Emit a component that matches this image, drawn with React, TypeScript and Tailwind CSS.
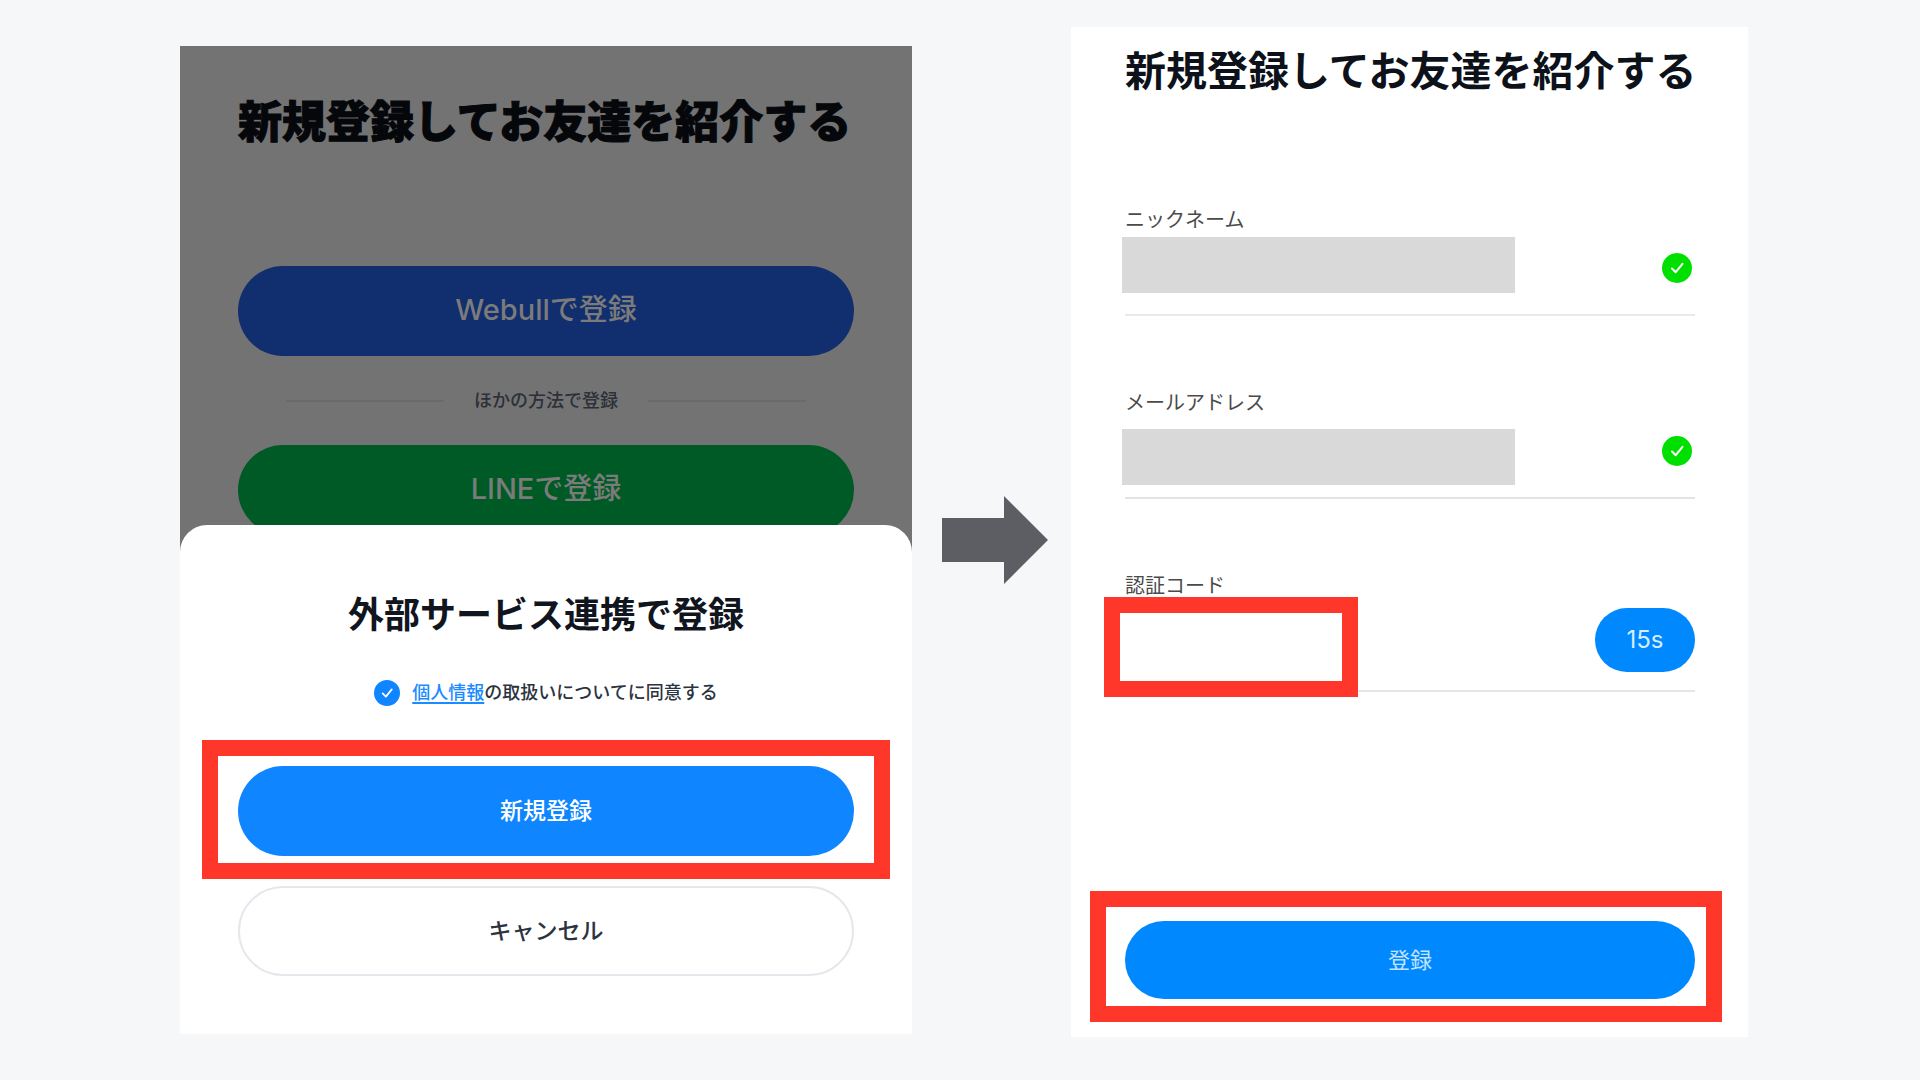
import React from "react";

function CheckMark({ className }: { className: string }) {
  return (
    <svg viewBox="0 0 30 30" className={className} fill="none" aria-hidden="true">
      <path
        d="M10 15.5 L13.7 19.2 L20.5 10.8"
        stroke="white"
        strokeWidth="2"
        strokeLinecap="round"
        strokeLinejoin="round"
      />
    </svg>
  );
}

function ValidBadge() {
  return (
    <span className="mt-[18px] size-[30px] shrink-0 rounded-full bg-[#00e000]">
      <CheckMark className="size-full" />
    </span>
  );
}

function Arrow() {
  return (
    <svg viewBox="0 0 106 88" className="mr-[23px] ml-[30px] h-[88px] w-[106px] self-center" aria-hidden="true">
      <path d="M0 22 H62 V0 L106 44 L62 88 V66 H0 Z" fill="#5c5e63" />
    </svg>
  );
}

function SignupChoice() {
  return (
    <section className="mt-[46px] min-w-0 overflow-hidden bg-white">
      <div className="bg-[#737373] px-[58px] pb-[17px]">
        <svg viewBox="0 0 110 4" className="-ml-1 h-[4px] w-[110px]" aria-hidden="true">
          {[4, 22, 40, 58, 77, 96].map((x) => (
            <circle key={x} cx={x} cy="0" r="3" fill="#6a727a" />
          ))}
        </svg>
        <h1 className="mt-[40px] text-[44px] leading-[64px] font-black whitespace-nowrap text-[#05070b] [-webkit-text-stroke:1px_#05070b]">
          新規登録してお友達を紹介する
        </h1>
        <button type="button" className="mt-[112px] h-[90px] w-full rounded-full bg-[#112e6e] pb-[2px] text-[29px] font-medium text-[#7b7b7b]">
          Webullで登録
        </button>
        <div className="flex h-[89px] items-center gap-[30px] px-[48px]">
          <span className="h-[2px] flex-1 bg-[#696a6c]" />
          <span className="text-[18px] font-medium text-[#2c3037]">ほかの方法で登録</span>
          <span className="h-[2px] flex-1 bg-[#696a6c]" />
        </div>
        <button type="button" className="h-[90px] w-full rounded-full bg-[#005a26] pb-[2px] text-[29px] font-medium text-[#7b7b7b]">
          LINEで登録
        </button>
      </div>

      <div className="relative -mt-[27px] flex flex-col rounded-t-[27px] bg-white px-[22px] pb-[58px]">
        <h2 className="mt-[63px] text-center text-[36px] leading-[54px] font-bold text-[#11151e]">
          外部サービス連携で登録
        </h2>
        <div className="mt-[35px] flex items-center justify-center gap-[12px] text-[18px] leading-[32px] font-medium text-[#2c3340]">
          <span className="relative size-[26px]">
            <input
              id="consent"
              type="checkbox"
              defaultChecked
              className="block size-full appearance-none rounded-full bg-[#0f86ff]"
            />
            <CheckMark className="pointer-events-none absolute inset-0 size-full" />
          </span>
          <label htmlFor="consent">
            <a href="#privacy" className="text-[#1a8cff] underline decoration-2 underline-offset-3">
              個人情報
            </a>
            の取扱いについてに同意する
          </label>
        </div>
        <div className="mt-[31px] border-[16px] border-[#ff372b] px-[20px] pt-[10px] pb-[7px]">
          <button type="button" className="block h-[90px] w-full rounded-full bg-[#0f86ff] text-[23px] font-medium text-white">
            新規登録
          </button>
        </div>
        <div className="mt-[7px] px-[36px]">
          <button type="button" className="block h-[90px] w-full rounded-full border-2 border-[#e6e7ec] text-[23px] font-medium text-[#2c3340]">
            キャンセル
          </button>
        </div>
      </div>
    </section>
  );
}

function DetailsForm() {
  return (
    <form className="mt-[27px] min-w-0 bg-white pr-[53px] pb-[15px] pl-[54px]">
      <h1 className="pt-[14px] text-[41px] leading-[60px] font-bold whitespace-nowrap text-[#0d121a]">
        新規登録してお友達を紹介する
      </h1>

      <div className="mt-[104px] flex flex-col gap-[72px] text-[20px] text-[#4b4b4b]">
        <div>
          <label htmlFor="nickname" className="block leading-[30px]">
            ニックネーム
          </label>
          <div className="flex h-[81px] items-start justify-between border-b-2 border-[#e7ebed] pr-[3px]">
            <input id="nickname" type="text" className="mt-[2px] -ml-[3px] h-[56px] w-[393px] bg-[#d9d9d9] px-2" />
            <ValidBadge />
          </div>
        </div>
        <div>
          <label htmlFor="email" className="block leading-[30px]">
            メールアドレス
          </label>
          <div className="flex h-[81px] items-start justify-between border-b-2 border-[#e1e5e9] pr-[3px]">
            <input id="email" type="email" className="mt-[11px] -ml-[3px] h-[56px] w-[393px] bg-[#d9d9d9] px-2" />
            <ValidBadge />
          </div>
        </div>
        <div>
          <label htmlFor="code" className="block leading-[30px]">
            認証コード
          </label>
          <div className="flex h-[91px] items-start justify-between border-b-2 border-[#e4e6ea]">
            <input
              id="code"
              type="text"
              inputMode="numeric"
              className="-mt-[4px] -ml-[21px] h-[100px] w-[254px] border-[16px] border-[#ff372b] bg-white px-2"
            />
            <button type="button" className="mt-[7px] h-[64px] w-[100px] rounded-full bg-[#0088ff] text-[24px] text-[#d6ecff]">
              15s
            </button>
          </div>
        </div>
      </div>

      <div className="mt-[199px] -mr-[27px] -ml-[35px] border-[16px] border-[#ff372b] pt-[14px] pr-[11px] pb-[7px] pl-[19px]">
        <button type="button" className="block h-[78px] w-full rounded-full bg-[#0088ff] text-[22px] text-[#c4e3ff]">
          登録
        </button>
      </div>
    </form>
  );
}

export default function App() {
  return (
    <main
      lang="ja"
      className="grid min-h-screen grid-cols-[732fr_auto_677fr] items-start bg-[#f6f7f9] pr-[172px] pl-[180px] font-[Inter,'Noto_Sans_CJK_JP',sans-serif]"
    >
      <SignupChoice />
      <Arrow />
      <DetailsForm />
    </main>
  );
}
